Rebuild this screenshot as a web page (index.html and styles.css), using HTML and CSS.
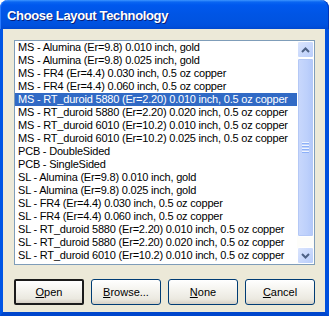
FILE: index.html
```html
<!DOCTYPE html>
<html>
<head>
<meta charset="utf-8">
<link rel="stylesheet" href="styles.css">
</head>
<body>
<div class="window">
  <div class="titlebar"><span class="title">Choose Layout Technology</span></div>
  <div class="frame">
    <div class="client">
      <div class="listbox">
        <div class="items">
          <div class="item">MS - Alumina (Er=9.8) 0.010 inch, gold</div>
          <div class="item">MS - Alumina (Er=9.8) 0.025 inch, gold</div>
          <div class="item">MS - FR4 (Er=4.4) 0.030 inch, 0.5 oz copper</div>
          <div class="item">MS - FR4 (Er=4.4) 0.060 inch, 0.5 oz copper</div>
          <div class="item selected">MS - RT_duroid 5880 (Er=2.20) 0.010 inch, 0.5 oz copper</div>
          <div class="item">MS - RT_duroid 5880 (Er=2.20) 0.020 inch, 0.5 oz copper</div>
          <div class="item">MS - RT_duroid 6010 (Er=10.2) 0.010 inch, 0.5 oz copper</div>
          <div class="item">MS - RT_duroid 6010 (Er=10.2) 0.025 inch, 0.5 oz copper</div>
          <div class="item">PCB - DoubleSided</div>
          <div class="item">PCB - SingleSided</div>
          <div class="item">SL - Alumina (Er=9.8) 0.010 inch, gold</div>
          <div class="item">SL - Alumina (Er=9.8) 0.025 inch, gold</div>
          <div class="item">SL - FR4 (Er=4.4) 0.030 inch, 0.5 oz copper</div>
          <div class="item">SL - FR4 (Er=4.4) 0.060 inch, 0.5 oz copper</div>
          <div class="item">SL - RT_duroid 5880 (Er=2.20) 0.010 inch, 0.5 oz copper</div>
          <div class="item">SL - RT_duroid 5880 (Er=2.20) 0.020 inch, 0.5 oz copper</div>
          <div class="item">SL - RT_duroid 6010 (Er=10.2) 0.010 inch, 0.5 oz copper</div>
          <div class="item">SL - RT_duroid 6010 (Er=10.2) 0.025 inch, 0.5 oz copper</div>
        </div>
        <div class="scrollbar">
          <div class="sbtn">
            <svg width="9" height="6" viewBox="0 0 9 6"><path d="M1 5 L4.5 1.5 L8 5" fill="none" stroke="#4d6185" stroke-width="2"/></svg>
          </div>
          <div class="thumb">
            <div class="grip"><i></i><i></i><i></i><i></i></div>
          </div>
          <div class="track"></div>
          <div class="sbtn">
            <svg width="9" height="6" viewBox="0 0 9 6"><path d="M1 1 L4.5 4.5 L8 1" fill="none" stroke="#4d6185" stroke-width="2"/></svg>
          </div>
        </div>
      </div>
      <div class="buttons">
        <div class="btn default"><span><u>O</u>pen</span></div>
        <div class="btn"><span><u>B</u>rowse...</span></div>
        <div class="btn"><span><u>N</u>one</span></div>
        <div class="btn"><span><u>C</u>ancel</span></div>
      </div>
    </div>
  </div>
</div>
</body>
</html>
```
FILE: styles.css
```css
html, body {
  margin: 0;
  padding: 0;
  background: #ffffff;
}
body {
  width: 329px;
  height: 316px;
  overflow: hidden;
  font-family: "Liberation Sans", Arial, sans-serif;
  font-size: 11px;
  color: #000;
}
.window {
  width: 329px;
  height: 316px;
  display: flex;
  flex-direction: column;
}
.titlebar {
  height: 29px;
  flex: none;
  border-radius: 8px 8px 0 0;
  background: linear-gradient(to bottom, #3d95ff 0px, #0a66f2 2px, #0058ee 5px, #0055e5 14px, #0053e1 22px, #0050dd 26px, #0048cf 29px);
  box-shadow: inset 1px 0 0 #2a7bff, inset -1px 0 0 #0035b8;
  display: flex;
  align-items: center;
  padding-left: 7px;
}
.title {
  color: #fff;
  font-family: "Liberation Sans", Arial, sans-serif;
  font-weight: bold;
  font-size: 13px;
  text-shadow: 1px 1px 0 #0a1e78;
  letter-spacing: -0.35px;
  margin-top: 1px;
}
.frame {
  flex: 1;
  display: flex;
  border-left: 3px solid #0055e5;
  border-right: 4px solid #0050dd;
  border-bottom: 4px solid #0046cc;
}
.client {
  flex: 1;
  background: #ece9d8;
  padding: 11px 10px 0 11px;
  display: flex;
  flex-direction: column;
}
.listbox {
  height: 225px;
  box-sizing: border-box;
  border: 1px solid #7f9db9;
  background: #fff;
  display: flex;
  overflow: hidden;
}
.items {
  flex: 1;
  overflow: hidden;
}
.item {
  height: 13px;
  line-height: 13px;
  padding-left: 3px;
  white-space: nowrap;
  overflow: hidden;
  letter-spacing: -0.2px;
}
.item.selected {
  background: #316ac5;
  color: #fff;
}
.scrollbar {
  width: 17px;
  flex: none;
  display: flex;
  flex-direction: column;
  background: #fdfdfa;
}
.sbtn {
  height: 17px;
  flex: none;
  box-sizing: border-box;
  border: 1px solid #fff;
  border-radius: 2px;
  background: linear-gradient(to bottom right, #dbe5fd, #b9cdfb);
  display: flex;
  align-items: center;
  justify-content: center;
}
.thumb {
  height: 179px;
  flex: none;
  box-sizing: border-box;
  border: 1px solid #fff;
  border-radius: 2px;
  background: linear-gradient(to right, #c9d8fc, #bdd0fb 60%, #b2c7f9);
  box-shadow: inset 0 0 0 1px #b4c8f6;
  display: flex;
  align-items: center;
  justify-content: center;
}
.grip {
  display: flex;
  flex-direction: column;
  gap: 1px;
}
.grip i {
  display: block;
  width: 7px;
  height: 1px;
  background: #eef4fe;
  border-bottom: 1px solid #8cb0f8;
}
.track {
  flex: 1;
  background: #fdfdfa;
}
.buttons {
  display: flex;
  gap: 7px;
  margin-top: 14px;
}
.btn {
  width: 70px;
  height: 26px;
  box-sizing: border-box;
  border: 1px solid #003c74;
  border-radius: 3px;
  background: linear-gradient(to bottom, #ffffff 0%, #f5f4ef 40%, #ebe9e0 80%, #d6d0c5 100%);
  display: flex;
  align-items: center;
  justify-content: center;
}
.btn.default {
  border: 2px solid #1b1b1b;
  border-radius: 2px;
}
```
